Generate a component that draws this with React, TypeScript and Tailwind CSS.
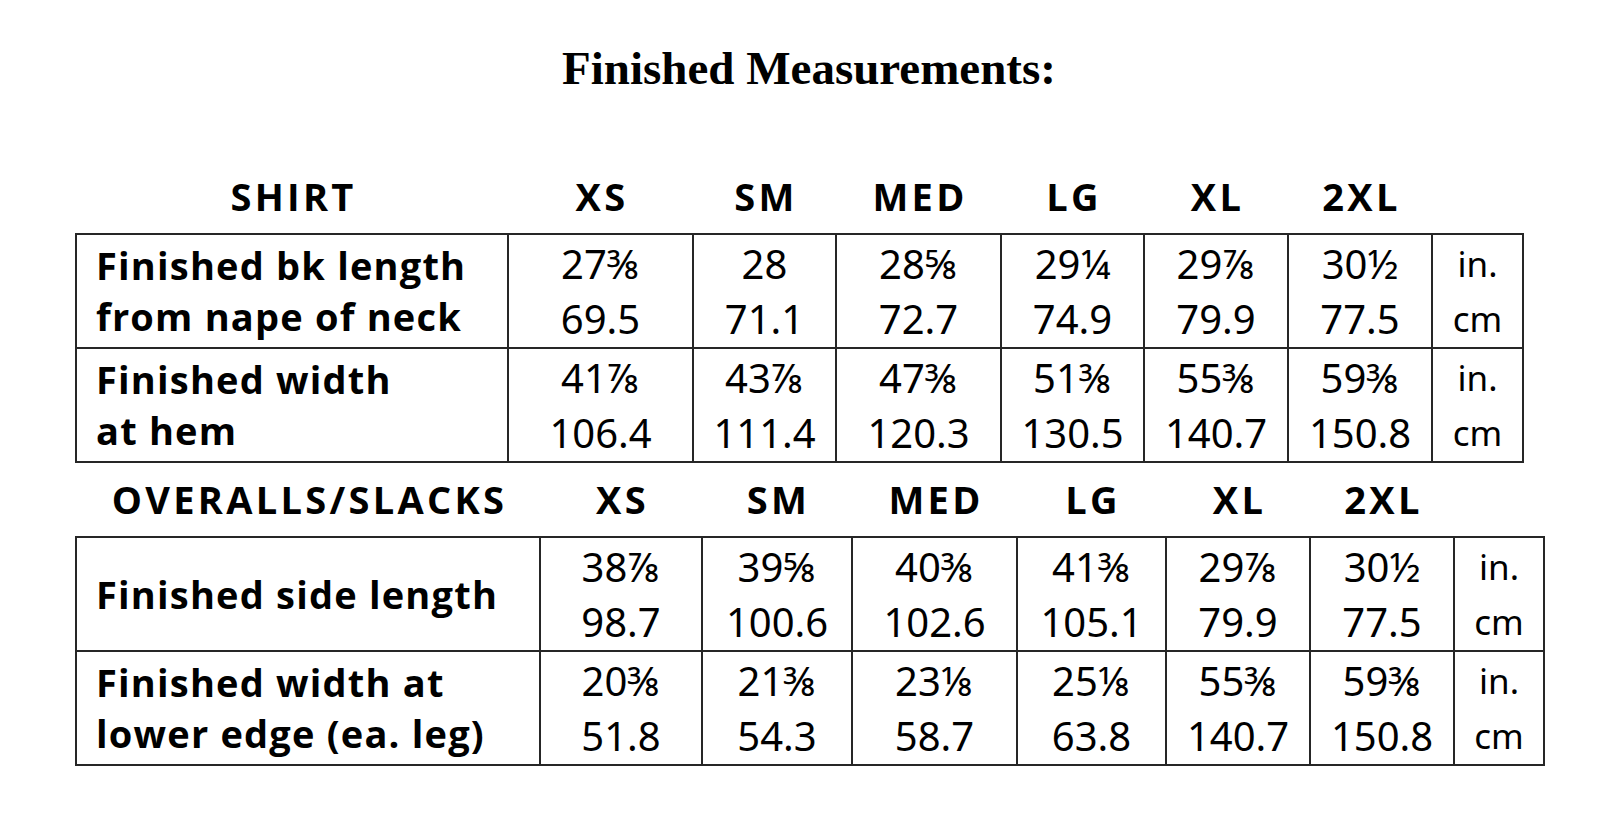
import React from "react";

type Row = { label: string[]; values: [string, string][] };

const shirtRows: Row[] = [
  {
    label: ["Finished bk length", "from nape of neck"],
    values: [
      ["27⅜", "69.5"],
      ["28", "71.1"],
      ["28⅝", "72.7"],
      ["29¼", "74.9"],
      ["29⅞", "79.9"],
      ["30½", "77.5"],
    ],
  },
  {
    label: ["Finished width", "at hem"],
    values: [
      ["41⅞", "106.4"],
      ["43⅞", "111.4"],
      ["47⅜", "120.3"],
      ["51⅜", "130.5"],
      ["55⅜", "140.7"],
      ["59⅜", "150.8"],
    ],
  },
];

const overallRows: Row[] = [
  {
    label: ["Finished side length"],
    values: [
      ["38⅞", "98.7"],
      ["39⅝", "100.6"],
      ["40⅜", "102.6"],
      ["41⅜", "105.1"],
      ["29⅞", "79.9"],
      ["30½", "77.5"],
    ],
  },
  {
    label: ["Finished width at", "lower edge (ea. leg)"],
    values: [
      ["20⅜", "51.8"],
      ["21⅜", "54.3"],
      ["23⅛", "58.7"],
      ["25⅛", "63.8"],
      ["55⅜", "140.7"],
      ["59⅜", "150.8"],
    ],
  },
];

const sizes = ["XS", "SM", "MED", "LG", "XL", "2XL"];

const shirtCols = "grid-cols-[430px_183px_141px_163px_141px_142px_142px_89px]";
const overallCols = "grid-cols-[462px_160px_148px_163px_147px_142px_142px_88px]";

const labelFont = "font-['Open_Sans','Noto_Sans',sans-serif] font-bold";
const numFont = "font-['Noto_Sans','DejaVu_Sans',sans-serif]";

function Header({ title, cols }: { title: string; cols: string }) {
  return (
    <div
      className={`grid ${cols} gap-[2px] px-[2px] text-[38px] leading-none tracking-[3.3px] text-black ${labelFont}`}
    >
      <div className="text-center whitespace-nowrap pl-[3px]">{title}</div>
      {sizes.map((s) => (
        <div key={s} className="text-center pl-[3px]">
          {s}
        </div>
      ))}
      <div />
    </div>
  );
}

function Table({ rows, cols }: { rows: Row[]; cols: string }) {
  return (
    <div className={`grid ${cols} gap-[2px] bg-[#262626] p-[2px] w-fit`}>
      {rows.map((r, i) => (
        <React.Fragment key={i}>
          <div
            className={`bg-white h-[112px] flex flex-col justify-center pl-[19px] text-[38px] leading-[51px] tracking-[1.2px] text-black ${labelFont}`}
          >
            {r.label.map((l) => (
              <div key={l} className="whitespace-nowrap">
                {l}
              </div>
            ))}
          </div>
          {r.values.map((v, j) => (
            <div
              key={j}
              className={`bg-white h-[112px] flex flex-col justify-center items-center text-[40px] leading-[55px] text-black ${numFont}`}
            >
              <div>{v[0]}</div>
              <div>{v[1]}</div>
            </div>
          ))}
          <div
            className={`bg-white h-[112px] flex flex-col justify-center items-center text-[35px] leading-[55px] text-black ${numFont}`}
          >
            <div>in.</div>
            <div>cm</div>
          </div>
        </React.Fragment>
      ))}
    </div>
  );
}

export default function App() {
  return (
    <div className="w-[1618px] h-[836px] bg-white overflow-hidden">
      <h1 className="pt-[45px] text-center text-[47px] leading-none font-bold text-black font-['Liberation_Serif','Times_New_Roman',serif]">
        Finished Measurements:
      </h1>
      <div className="pl-[75px]">
        <div className="mt-[85px]">
          <Header title="SHIRT" cols={shirtCols} />
        </div>
        <div className="mt-[18px]">
          <Table rows={shirtRows} cols={shirtCols} />
        </div>
        <div className="mt-[17px]">
          <Header title="OVERALLS/SLACKS" cols={overallCols} />
        </div>
        <div className="mt-[18px]">
          <Table rows={overallRows} cols={overallCols} />
        </div>
      </div>
    </div>
  );
}
